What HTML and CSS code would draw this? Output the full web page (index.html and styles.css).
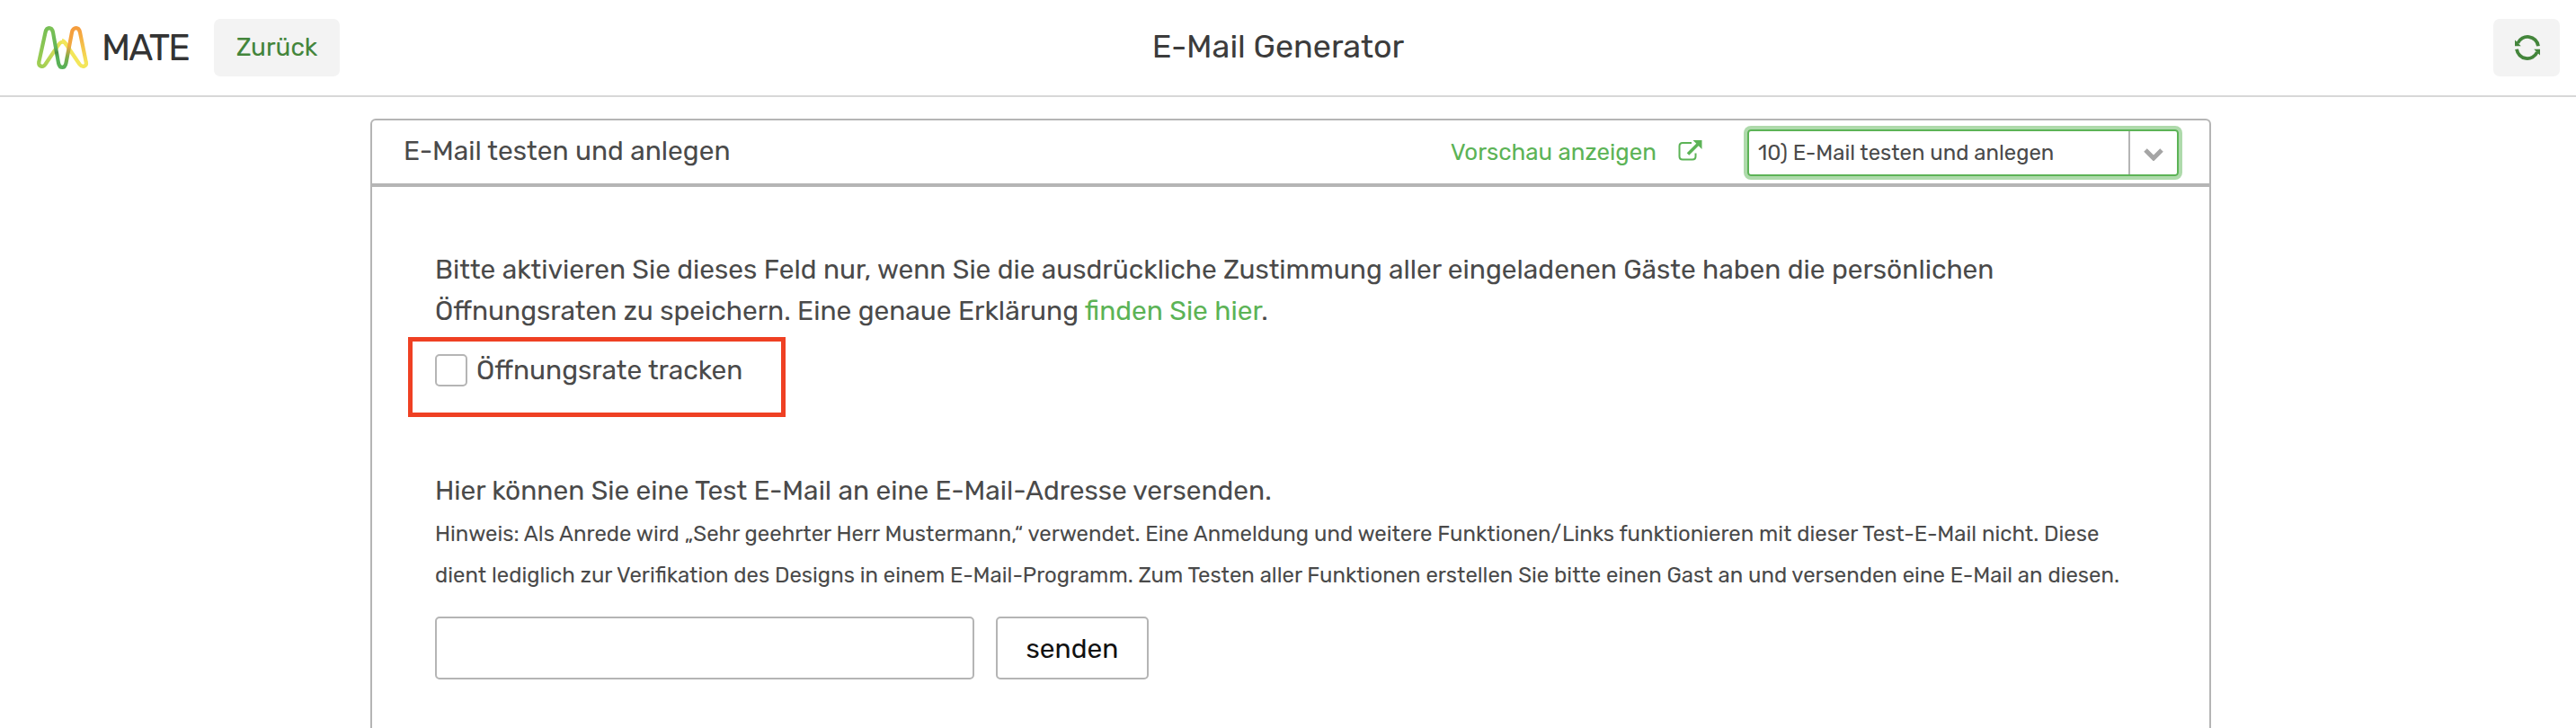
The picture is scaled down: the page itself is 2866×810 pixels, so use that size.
FILE: index.html
```
<!DOCTYPE html>
<html lang="de">
<head>
    <meta charset="UTF-8">
    <meta name="viewport" content="width=device-width, initial-scale=1.0">
    <title>E-Mail Generator</title>
    <link rel="stylesheet" href="styles.css">
</head>
<body>
    <header class="topbar">
        <div class="topbar-left">
            <svg class="logo" viewBox="0 0 60 50" fill="none" stroke-width="4.200" stroke-linejoin="round">
                <defs>
                    <linearGradient id="green" x1="0" y1="0" x2="0" y2="1">
                        <stop offset="0" stop-color="#7cc256"/>
                        <stop offset=".5" stop-color="#62b457"/>
                        <stop offset=".62" stop-color="#4a8f48"/>
                        <stop offset=".75" stop-color="#56b058"/>
                        <stop offset="1" stop-color="#5cb356"/>
                    </linearGradient>
                    <linearGradient id="left" x1="0" y1="0" x2="0" y2="1">
                        <stop offset="0" stop-color="#76be55"/>
                        <stop offset="1" stop-color="#9ccd52"/>
                    </linearGradient>
                    <linearGradient id="lime" x1="0" y1="1" x2="1" y2="0">
                        <stop offset="0" stop-color="#9ccd52"/>
                        <stop offset="1" stop-color="#f3e65a"/>
                    </linearGradient>
                    <linearGradient id="orange" x1="0" y1="0" x2="0" y2="1">
                        <stop offset="0" stop-color="#f59c3c"/>
                        <stop offset="1" stop-color="#f4e458"/>
                    </linearGradient>
                    <linearGradient id="rise" x1="0" y1="0" x2="0" y2="1">
                        <stop offset="0" stop-color="#f59c3c"/>
                        <stop offset=".45" stop-color="#f0a840"/>
                        <stop offset=".75" stop-color="#7cab4a"/>
                        <stop offset="1" stop-color="#56b058"/>
                    </linearGradient>
                </defs>
                <path stroke="url(#lime)" d="M3.200 41C2.500 46 8 47.500 10.500 43.500L25 22Q29.500 15.500 34 22"/>
                <path stroke="#f3e65a" d="M29 17.200Q31.500 17.500 34 22L48.500 43.500C51.500 47.500 57 46 55.800 41"/>
                <path stroke="url(#left)" d="M3.200 41.500L10.500 8Q11.500 3.200 15 3.200"/>
                <path stroke="url(#green)" d="M14.500 3.200Q18 3.200 19 8L25 42Q26 47 29.500 47"/>
                <path stroke="url(#rise)" d="M29 47Q32.500 47 33.500 42L40 8Q41 3.200 45 3.200"/>
                <path stroke="url(#orange)" d="M44.500 3.200Q48 3.200 49 8L55.800 41.500"/>
            </svg>
            <span class="brand">MATE</span>
            <button class="btn-grey btn-back">Zurück</button>
        </div>
        <h1 class="page-title">E-Mail Generator</h1>
        <button class="btn-grey btn-refresh" aria-label="Aktualisieren">
            <svg class="icon-refresh" viewBox="0 0 28 28">
                <path fill="none" stroke="#43853b" stroke-width="3.800" d="M3.200 9A12 12 0 0 1 26 12.200M24.800 19A12 12 0 0 1 2 15.800"/>
                <path fill="#43853b" d="M0 5.500V12.200h6.800zM28 22.500V15.800h-6.800z"/>
            </svg>
        </button>
    </header>

    <main class="panel">
        <div class="panel-header">
            <h2 class="panel-title">E-Mail testen und anlegen</h2>
            <a class="preview-link" href="#">
                <span class="preview-text">Vorschau anzeigen</span>
                <svg class="icon-external" viewBox="0 0 27 23">
                    <path fill="none" stroke="#5cb356" stroke-width="2" d="M15 3H5Q1.500 3 1.500 6.500V18Q1.500 21.500 5 21.500H16Q19.500 21.500 19.500 18V14.500"/>
                    <path fill="none" stroke="#5cb356" stroke-width="3.500" d="M11 15.500L22 4.500"/>
                    <path fill="#5cb356" d="M16.500 0H26.500V10z"/>
                </svg>
            </a>
            <div class="select">
                <span class="select-value">10) E-Mail testen und anlegen</span>
                <span class="select-arrow">
                    <svg class="icon-chevron" viewBox="0 0 22 14">
                        <path fill="none" stroke="#a5a5a5" stroke-width="5" d="M2 2L11 11L20 2"/>
                    </svg>
                </span>
            </div>
        </div>

        <div class="panel-body">
            <p class="text"><span class="line">Bitte aktivieren Sie dieses Feld nur, wenn Sie die ausdrückliche Zustimmung aller eingeladenen Gäste haben die persönlichen</span><br><span class="line">Öffnungsraten zu speichern. Eine genaue Erklärung <a href="#">finden Sie hier</a>.</span></p>

            <label class="track-box">
                <input type="checkbox" class="checkbox">
                <span class="track-label">Öffnungsrate tracken</span>
            </label>

            <p class="text test-text">Hier können Sie eine Test E-Mail an eine E-Mail-Adresse versenden.</p>
            <p class="hint"><span class="line">Hinweis: Als Anrede wird „Sehr geehrter Herr Mustermann,“ verwendet. Eine Anmeldung und weitere Funktionen/Links funktionieren mit dieser Test-E-Mail nicht. Diese</span><br><span class="line">dient lediglich zur Verifikation des Designs in einem E-Mail-Programm. Zum Testen aller Funktionen erstellen Sie bitte einen Gast an und versenden eine E-Mail an diesen.</span></p>

            <div class="send-row">
                <input type="email" class="mail-input" aria-label="E-Mail-Adresse">
                <button class="btn-send">senden</button>
            </div>
        </div>
    </main>
</body>
</html>
```
FILE: styles.css
```
* {
    box-sizing: border-box;
}

body {
    margin: 0;
    height: 810px;
    overflow: hidden;
    display: flex;
    flex-direction: column;
    background: #fff;
    color: #4a4a4a;
    font-family: Rubik, Roboto, sans-serif;
    font-size: 29.91px;
    font-weight: 400;
}

h1, h2, p {
    margin: 0;
    font-weight: inherit;
}

a {
    color: #5cb356;
    text-decoration: none;
}

button, input {
    font-family: inherit;
    font-weight: inherit;
}

svg {
    display: block;
}

.line {
    white-space: nowrap;
}

/* Kopfzeile */
.topbar {
    flex: none;
    display: grid;
    grid-template-columns: 1fr auto 1fr;
    align-items: center;
    height: 108px;
    padding: 0 18px 0 40px;
    border-bottom: 2px solid #d8d8d8;
}

.topbar-left {
    display: flex;
    align-items: center;
}

.logo {
    width: 60px;
    height: 50px;
}

.brand {
    width: 98px;
    margin-left: 13px;
    color: #333;
    font-size: 40.5px;
    line-height: 48px;
    letter-spacing: -1.8px;
}

.btn-grey {
    height: 64px;
    padding: 0;
    border: none;
    border-radius: 7px;
    background: #f3f3f3;
    color: #43853b;
}

.btn-back {
    width: 140px;
    margin-left: 27px;
    padding-bottom: 2px;
    font-size: 28px;
}

.page-title {
    margin: 0 44px 2px 0;
    color: #3c3c3c;
    font-size: 35.9px;
    line-height: 44px;
}

.btn-refresh {
    justify-self: end;
    display: flex;
    align-items: center;
    justify-content: center;
    width: 74px;
    padding-left: 2px;
}

.icon-refresh {
    width: 28px;
    height: 28px;
}

/* Panel */
.panel {
    flex: 1;
    width: 2048px;
    margin: 24px 0 0 412px;
    border: 2px solid #b5b5b5;
    border-bottom: none;
    border-radius: 6px 6px 0 0;
}

.panel-header {
    display: flex;
    align-items: center;
    height: 74px;
    padding: 2px 34px 0 35px;
    border-bottom: 4px solid #b5b5b5;
}

.panel-title {
    flex: 1;
    padding-bottom: 5px;
    font-size: 29.91px;
}

.preview-link {
    display: flex;
    align-items: center;
    gap: 24px;
    font-size: 25.92px;
}

.preview-text {
    padding-bottom: 2px;
}

.icon-external {
    width: 27px;
    height: 23px;
    margin-bottom: 5px;
}

.select {
    display: flex;
    width: 480px;
    height: 52px;
    margin-left: 50px;
    border: 2px solid #5cb356;
    border-radius: 4px;
    box-shadow: 0 0 0 4px #aedaab;
}

.select-value {
    flex: 1;
    padding-left: 10px;
    font-size: 23.92px;
    line-height: 48px;
}

.select-arrow {
    display: flex;
    align-items: center;
    justify-content: center;
    width: 54px;
    padding-top: 3px;
    border-left: 2px solid #b5b5b5;
}

.icon-chevron {
    width: 22px;
    height: 14px;
}

.panel-body {
    padding: 69px 70px 0;
}

.text {
    line-height: 46px;
}

.track-box {
    display: flex;
    align-items: flex-start;
    width: 420px;
    height: 89px;
    margin: 6px 0 0 -30px;
    padding: 14px 25px;
    border: 5px solid #ef4023;
}

.checkbox {
    appearance: none;
    width: 36px;
    height: 36px;
    margin: 0;
    border: 2px solid #b5b5b5;
    border-radius: 5px;
    background: #fff;
}

.track-label {
    margin-left: 10px;
    line-height: 36px;
}

.test-text {
    margin-top: 59px;
}

.hint {
    padding-top: 2px;
    font-size: 23.93px;
    line-height: 46px;
}

.send-row {
    display: flex;
    gap: 24px;
    margin-top: 23px;
}

.mail-input {
    width: 600px;
    height: 70px;
    border: 2px solid #b5b5b5;
    border-radius: 5px;
}

.btn-send {
    width: 170px;
    height: 70px;
    padding: 1px 0 0;
    border: 2px solid #b5b5b5;
    border-radius: 5px;
    background: #fff;
    color: #111;
    font-size: 29.91px;
}
```
